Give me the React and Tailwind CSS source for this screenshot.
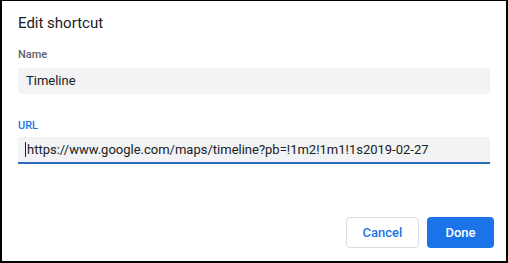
import React from 'react';

export default function App() {
  return (
    <div
      className="w-[508px] h-[263px] bg-white border-l-2 border-t border-r-2 border-b-2 border-black flex flex-col text-[#202124]"
      style={{ fontFamily: 'Roboto, "Liberation Sans", sans-serif' }}
    >
      <div className="px-4 pt-3">
        <h1 className="text-[15px] leading-5 font-normal">Edit shortcut</h1>

        <label className="block mt-[14px] text-[11px] leading-4 font-medium text-[#5f6368]">Name</label>
        <div className="mt-[5px] h-[26px] rounded bg-[#f1f3f4] flex items-center px-2 text-[13px]">
          Timeline
        </div>

        <label className="block mt-[24px] text-[11px] leading-4 font-medium text-[#1a73e8]">URL</label>
        <div className="mt-[3px] h-[27px] rounded-t bg-[#f1f3f4] border-b-2 border-[#2b6cb8] flex items-center px-2 text-[13px]">
          <span className="w-px h-[15px] bg-[#202124] -ml-px mr-px"></span>
          https://www.google.com/maps/timeline?pb=!1m2!1m1!1s2019-02-27
        </div>
      </div>

      <div className="mt-auto flex justify-end gap-2 pr-3 pb-[13px]">
        <button className="w-[73px] h-[31px] rounded border border-[#dadce0] bg-white text-[13px] font-medium text-[#1a73e8]">
          Cancel
        </button>
        <button className="w-[67px] h-[31px] rounded bg-[#1a73e8] text-[13px] font-medium text-white">
          Done
        </button>
      </div>
    </div>
  );
}
